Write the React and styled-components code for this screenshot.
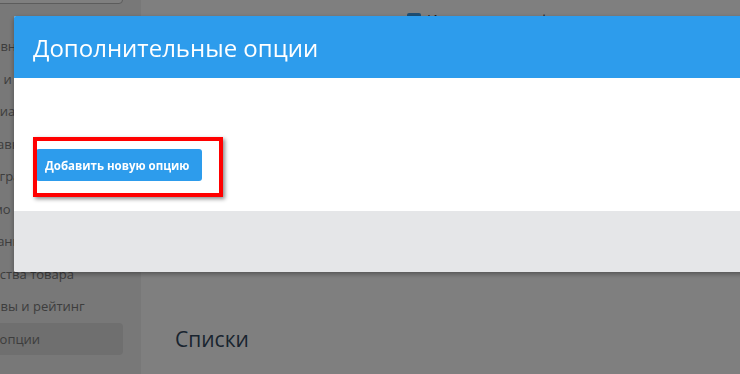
import React from 'react'
import styled, { createGlobalStyle } from 'styled-components'

const GlobalStyle = createGlobalStyle`
  html, body {
    margin: 0;
    padding: 0;
    height: 100%;
    overflow: hidden;
  }
  body {
    font-family: 'Open Sans', 'Liberation Sans', sans-serif;
    background: #ffffff;
  }
`

const Page = styled.div`
  display: flex;
  height: 374px;
  margin-left: -44px;
`

const Sidebar = styled.aside`
  width: 185px;
  flex: none;
  background: #f0f0f0;
  display: flex;
  flex-direction: column;
`

const Search = styled.div`
  height: 8px;
  margin: -6px 18px 26px 0;
  border: 1px solid #b8b8b8;
  border-radius: 4px;
  background: #ffffff;
`

const NavItem = styled.div`
  height: 32.5px;
  display: flex;
  align-items: center;
  padding-left: 12px;
  margin-right: 18px;
  border-radius: 4px;
  font-size: 13px;
  color: #7b7b7b;
  white-space: nowrap;
  background: ${(p) => (p.$active ? '#dedede' : 'transparent')};
`

const Main = styled.main`
  flex: 1;
  padding: 10px 34px;
  display: flex;
  flex-direction: column;
`

const CheckRow = styled.label`
  display: flex;
  align-items: center;
  gap: 6px;
  margin-left: 232px;
  font-size: 14px;
  color: #333;
`

const Check = styled.span`
  width: 14px;
  height: 14px;
  border-radius: 2px;
  background: #3d9de6;
`

const SectionTitle = styled.h2`
  margin: auto 0 11px;
  font-size: 21px;
  font-weight: 400;
  color: #34495e;
`

const Overlay = styled.div`
  position: fixed;
  inset: 0;
  background: rgba(0, 0, 0, 0.5);
`

const Modal = styled.div`
  position: fixed;
  top: 16px;
  left: 14px;
  width: 780px;
  background: #ffffff;
  border-radius: 2px;
  box-shadow: 0 2px 5px rgba(0, 0, 0, 0.35);
  overflow: hidden;
`

const ModalHeader = styled.header`
  height: 62px;
  background: #2d9cec;
  display: flex;
  align-items: center;
  padding-left: 19px;
`

const ModalTitle = styled.h3`
  margin: 0;
  font-size: 24px;
  font-weight: 400;
  color: #ffffff;
`

const ModalBody = styled.div`
  height: 133px;
  box-sizing: border-box;
  padding: 71px 0 0 22px;
  position: relative;
`

const Button = styled.button`
  height: 32px;
  width: 166px;
  border: none;
  border-radius: 3px;
  background: #2d9cec;
  color: #ffffff;
  font-family: 'Open Sans', 'Liberation Sans', sans-serif;
  font-size: 11.5px;
  font-weight: 700;
  text-align: left;
  padding: 0 0 0 9px;
`

const Highlight = styled.div`
  position: absolute;
  left: 19px;
  top: 59px;
  width: 182px;
  height: 52px;
  border: 4px solid #ff0000;
  box-shadow: 2px 2px 4px rgba(0, 0, 0, 0.45);
  pointer-events: none;
`

const ModalFooter = styled.footer`
  height: 61px;
  background: #e5e6e8;
`

const navItems = [
  'Основное',
  'Фото и видео',
  'Специальные',
  'Доставка',
  'Интеграции',
  'Промо',
  'Связанные',
  'Свойства товара',
  'Отзывы и рейтинг',
  'Доп. опции',
]

export default function App() {
  return (
    <>
      <GlobalStyle />
      <Page>
        <Sidebar>
          <Search />
          {navItems.map((item, i) => (
            <NavItem key={item} $active={i === navItems.length - 1}>
              {item}
            </NavItem>
          ))}
        </Sidebar>
        <Main>
          <CheckRow>
            <Check />
            Использовать в фильтрах
          </CheckRow>
          <SectionTitle>Списки</SectionTitle>
        </Main>
      </Page>
      <Overlay />
      <Modal>
        <ModalHeader>
          <ModalTitle>Дополнительные опции</ModalTitle>
        </ModalHeader>
        <ModalBody>
          <Button>Добавить новую опцию</Button>
          <Highlight />
        </ModalBody>
        <ModalFooter />
      </Modal>
    </>
  )
}
